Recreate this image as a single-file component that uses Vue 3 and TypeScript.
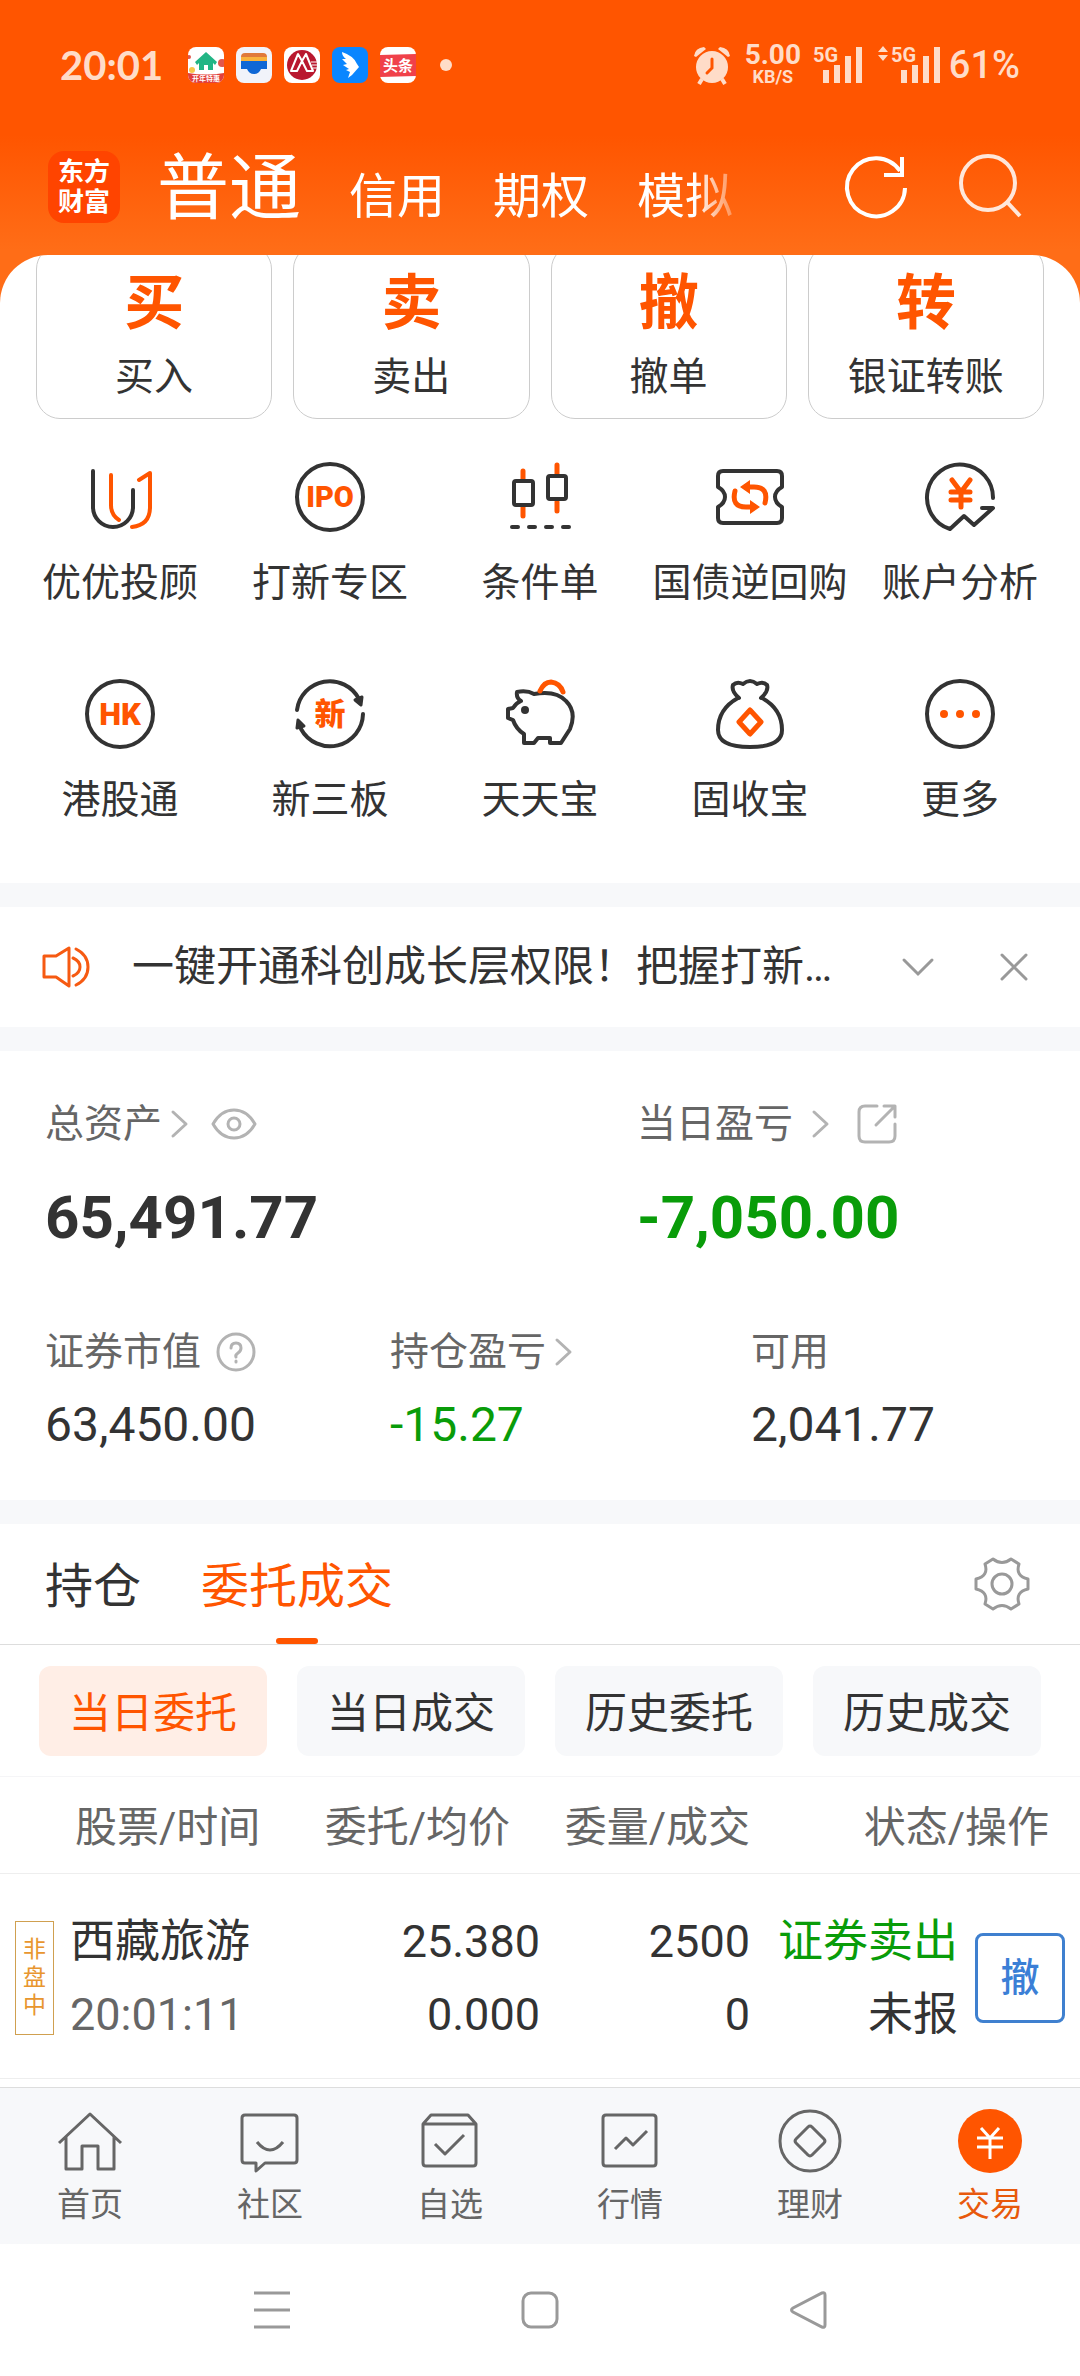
<script setup lang="ts">
import { ref } from 'vue'

interface Order {
  tag: string
  name: string
  time: string
  price: string
  average: string
  amount: string
  filled: string
  side: string
  state: string
}

const accountTabs: string[] = ['普通', '信用', '期权', '模拟']
const activeAccount = ref('普通')

const quickActions = [
  { glyph: '买', label: '买入' },
  { glyph: '卖', label: '卖出' },
  { glyph: '撤', label: '撤单' },
  { glyph: '转', label: '银证转账' },
]

const services = [
  { icon: 'advisor', label: '优优投顾' },
  { icon: 'ipo', label: '打新专区' },
  { icon: 'candles', label: '条件单' },
  { icon: 'repo', label: '国债逆回购' },
  { icon: 'analysis', label: '账户分析' },
  { icon: 'hk', label: '港股通' },
  { icon: 'neeq', label: '新三板' },
  { icon: 'piggy', label: '天天宝' },
  { icon: 'bag', label: '固收宝' },
  { icon: 'more', label: '更多' },
]

const noticeOpen = ref(true)

const bookTabs: string[] = ['持仓', '委托成交']
const activeBook = ref('委托成交')

const filters: string[] = ['当日委托', '当日成交', '历史委托', '历史成交']
const activeFilter = ref('当日委托')

const orders: Order[] = [
  {
    tag: '非盘中',
    name: '西藏旅游',
    time: '20:01:11',
    price: '25.380',
    average: '0.000',
    amount: '2500',
    filled: '0',
    side: '证券卖出',
    state: '未报',
  },
]

const navItems = [
  { icon: 'home', label: '首页' },
  { icon: 'community', label: '社区' },
  { icon: 'watchlist', label: '自选' },
  { icon: 'market', label: '行情' },
  { icon: 'wealth', label: '理财' },
  { icon: 'trade', label: '交易' },
]
const activeNav = ref('trade')
</script>

<template>
  <div class="page">
    <header class="top">
      <div class="status">
        <span class="clock">20:01</span>
        <div class="apps">
          <svg class="app" viewBox="0 0 36 36">
            <clipPath id="app-clip"><rect width="36" height="36" rx="8" /></clipPath>
            <g clip-path="url(#app-clip)">
              <rect width="36" height="36" fill="#fff" />
              <circle cx="34" cy="16" r="4" fill="#e2574c" />
              <circle cx="1" cy="10" r="2" fill="#e2574c" />
              <circle cx="4" cy="23" r="3" fill="#f7c64a" />
              <path d="M0 26Q18 29 36 26V36H0Z" fill="#e2403c" />
              <path d="M18 5L7 15l2 3 2-2v7h5v-5h4v5h5v-7l2 2 2-3Z" fill="#22b585" />
              <text x="18" y="34" text-anchor="middle" font-size="7" font-weight="700" fill="#fff">开年特惠</text>
            </g>
          </svg>
          <svg class="app" viewBox="0 0 36 36">
            <rect width="36" height="36" rx="8" fill="#f1f3fa" />
            <path d="M5 10q0-4 4-4h18q4 0 4 4Z" fill="#e0793a" />
            <path d="M5 10h26v4H5Z" fill="#f9b23c" />
            <path d="M5 14h26v8h-6q-2 5-7 5t-7-5H5Z" fill="#0f67d6" />
          </svg>
          <svg class="app" viewBox="0 0 36 36">
            <rect width="36" height="36" rx="8" fill="#fff" />
            <circle cx="18" cy="18" r="15" fill="#b9182f" />
            <path d="M14 7L7 24H13L18 14 23 24H29L22 7 18 14Z" fill="none" stroke="#fff" stroke-width="2" stroke-linejoin="round" />
            <path d="M27 15h7M28 18h6M29 21h4" stroke="#fff" stroke-width="1" />
          </svg>
          <svg class="app" viewBox="0 0 36 36">
            <rect width="36" height="36" rx="8" fill="#0a86ff" />
            <path d="M10 5Q22 9 25 17L27 20 20 28 16 31 18 25 14 23 17 22 11 18 15 17 10 12 14 12Q10 9 10 5Z" fill="#fff" />
          </svg>
          <svg class="app" viewBox="0 0 36 36">
            <rect width="36" height="36" rx="8" fill="#fff" />
            <path d="M0 8l36-1v22l-36 1Z" fill="#f0414a" />
            <text x="18" y="24" text-anchor="middle" font-size="15" font-weight="700" fill="#fff">头条</text>
          </svg>
        </div>
        <i class="dot"></i>
        <div class="signals">
          <svg class="alarm" viewBox="0 0 38 38" fill="currentColor">
            <path d="M1 10Q2 2 11 1L13 3 3 11ZM37 10Q36 2 27 1L25 3 35 11Z" />
            <path d="M19 5a16 16 0 1 1 0 32a16 16 0 1 1 0-32Z" />
            <path d="M9 33l-3 5M29 33l3 5" stroke="currentColor" stroke-width="4" />
            <path d="M19 13v9l-5 5" fill="none" stroke="#ff5500" stroke-width="3" stroke-linecap="round" />
          </svg>
          <span class="speed"><b>5.00</b><small>KB/S</small></span>
          <svg class="bars" viewBox="0 0 50 38" fill="currentColor">
            <text x="0" y="16" font-size="20" font-weight="700">5G</text>
            <path d="M10 24h6v13h-6ZM21 19h6v18h-6ZM32 10h6v27h-6ZM43 1h6v36h-6Z" />
          </svg>
          <svg class="bars wide" viewBox="0 0 64 38" fill="currentColor">
            <path d="M6 0l5 6H1ZM6 15l5-6H1Z" />
            <text x="14" y="16" font-size="20" font-weight="700">5G</text>
            <path d="M24 24h6v13h-6ZM35 19h6v18h-6ZM46 10h6v27h-6ZM57 1h6v36h-6Z" />
          </svg>
          <span class="battery">61%</span>
        </div>
      </div>

      <div class="titlebar">
        <div class="logo">东方<br />财富</div>
        <nav class="accounts">
          <button
            v-for="tab in accountTabs"
            :key="tab"
            type="button"
            :class="{ active: tab === activeAccount }"
            @click="activeAccount = tab"
          >{{ tab }}</button>
        </nav>
        <button class="tool refresh" type="button" aria-label="刷新">
          <svg viewBox="0 0 66 66" fill="none" stroke="currentColor" stroke-width="4">
            <path d="M62 34A29 29 0 1 1 57 17" />
            <path d="M59 3V21H41" />
          </svg>
        </button>
        <button class="tool" type="button" aria-label="搜索">
          <svg viewBox="0 0 66 66" fill="none" stroke="currentColor" stroke-width="4" opacity="0.850">
            <circle cx="31" cy="29" r="27" />
            <path d="M50 48L63 62" />
          </svg>
        </button>
      </div>
    </header>

    <section class="panel">
      <div class="cards">
        <button v-for="item in quickActions" :key="item.label" class="card" type="button">
          <span class="glyph">{{ item.glyph }}</span>
          <span class="caption">{{ item.label }}</span>
        </button>
      </div>
      <div class="services">
        <a v-for="item in services" :key="item.icon" class="service" href="#">
          <svg viewBox="0 0 72 72" fill="none" stroke="#333" stroke-width="4" stroke-linecap="round" stroke-linejoin="round">
            <template v-if="item.icon === 'advisor'">
              <path d="M9 10V46a20 20 0 0 0 40 0V29" />
              <path class="hot" d="M27 14V44q0 10 8 15M48 66Q66 64 66 46V12L55 19" />
            </template>
            <template v-else-if="item.icon === 'ipo'">
              <circle cx="36" cy="36" r="33" />
              <text class="mark" x="36" y="46" font-size="29">IPO</text>
            </template>
            <template v-else-if="item.icon === 'candles'">
              <path class="hot" d="M19 10V19M19 46V55M53 4V13M53 41V50" stroke-width="5" />
              <rect x="10" y="20" width="19" height="24" rx="2" />
              <rect x="44" y="15" width="18" height="23" rx="2" />
              <path d="M8 66h6M25 66h6M42 66h6M59 66h6" />
            </template>
            <template v-else-if="item.icon === 'repo'">
              <path d="M4 15Q4 10 9 10H63Q68 10 68 15V26q-7 4-7 10t7 10V57q0 5-5 5H9q-5 0-5-5V46q7-4 7-10t-7-10Z" />
              <path class="hot" d="M21 30Q17 46 32 46H38M51 42Q55 26 40 26H34" stroke-width="5" />
              <path d="M36 39L46 46 36 53ZM36 19L26 26 36 33Z" fill="#ff5500" stroke="none" />
            </template>
            <template v-else-if="item.icon === 'analysis'">
              <path d="M69 37A33 33 0 1 0 26 68L40 55 50 64 69 47H58" />
              <path class="hot" d="M28 19L37 31 46 19M37 31V46M27 31H46M27 39H46" stroke-width="5" />
            </template>
            <template v-else-if="item.icon === 'hk'">
              <circle cx="36" cy="36" r="33" />
              <text class="mark" x="36" y="47" font-size="31">HK</text>
            </template>
            <template v-else-if="item.icon === 'neeq'">
              <path d="M3 32A33 33 0 0 1 65 21M69 36A33 33 0 0 1 7 51" />
              <path d="M61 22L68 19 67 27ZM4 42L10 48 3 50Z" fill="#333" stroke-width="3" />
              <text class="mark" x="36" y="47" font-size="31">新</text>
            </template>
            <template v-else-if="item.icon === 'piggy'">
              <path d="M13 14q10-2 17 2Q52 12 62 23 73 34 66 51L57 65H46V60H34L30 65H20V56Q12 51 9 42L4 40V31L9 30Q12 25 17 23 12 20 13 14Z" />
              <circle cx="21" cy="32" r="4" fill="#333" stroke="none" />
              <path class="hot" d="M36 13Q40 4 47 4 56 5 59 14" stroke-width="5" />
            </template>
            <template v-else-if="item.icon === 'bag'">
              <path d="M24 20Q4 31 4 52 4 69 36 69 68 69 68 52 68 31 48 20M25 20Q17 13 19 7 23 3 29 6 36 0 43 6 49 3 53 7 55 13 47 20" />
              <path class="hot" d="M36 32L47 44 36 56 25 44Z" stroke-width="5" />
            </template>
            <template v-else>
              <circle cx="36" cy="36" r="33" />
              <path class="hot" d="M20 36h0M36 36h0M52 36h0" stroke-width="8" />
            </template>
          </svg>
          <span class="caption">{{ item.label }}</span>
        </a>
      </div>
    </section>

    <section v-if="noticeOpen" class="notice">
      <svg class="horn" viewBox="0 0 48 42" fill="none" stroke="#f65a12" stroke-width="3" stroke-linecap="round" stroke-linejoin="round">
        <path d="M2 10H14L27 2V40L14 31H2ZM31 12q7 3 7 9t-7 9M34 3Q46 9 46 21T34 39" />
      </svg>
      <p>一键开通科创成长层权限！把握打新…</p>
      <button type="button" aria-label="展开">
        <svg viewBox="0 0 32 32"><path d="M2 9L16 23 30 9" /></svg>
      </button>
      <button type="button" aria-label="关闭" @click="noticeOpen = false">
        <svg viewBox="0 0 32 32"><path d="M4 4L28 28M28 4L4 28" /></svg>
      </button>
    </section>

    <section class="assets">
      <div class="totals">
        <div>
          <div class="label">
            总资产
            <svg class="chev" viewBox="0 0 16 26"><path d="M1 1L14 13 1 25" /></svg>
            <svg class="eye" viewBox="0 0 46 32">
              <path d="M2 16Q10 2 23 2T44 16Q36 30 23 30T2 16Z" />
              <circle cx="23" cy="16" r="6" />
            </svg>
          </div>
          <div class="big">65,491.77</div>
        </div>
        <div>
          <div class="label today">
            当日盈亏
            <svg class="chev" viewBox="0 0 16 26"><path d="M1 1L14 13 1 25" /></svg>
            <svg class="share" viewBox="0 0 40 40">
              <path d="M20 2H8Q2 2 2 8V32Q2 38 8 38H32Q38 38 38 32V20M27 2H38V13M37 3L19 21" />
            </svg>
          </div>
          <div class="big fall">-7,050.00</div>
        </div>
      </div>
      <div class="details">
        <div>
          <div class="label">
            证券市值
            <svg class="help" viewBox="0 0 40 40">
              <circle cx="20" cy="20" r="18" />
              <path d="M15 16q0-5 5-5t5 5q0 3-3 5t-2 4M20 29v1" />
            </svg>
          </div>
          <div class="value">63,450.00</div>
        </div>
        <div>
          <div class="label">
            持仓盈亏
            <svg class="chev" viewBox="0 0 16 26"><path d="M1 1L14 13 1 25" /></svg>
          </div>
          <div class="value fall">-15.27</div>
        </div>
        <div>
          <div class="label">可用</div>
          <div class="value">2,041.77</div>
        </div>
      </div>
    </section>

    <section class="book">
      <div class="tabs">
        <button
          v-for="tab in bookTabs"
          :key="tab"
          type="button"
          class="tab"
          :class="{ active: tab === activeBook }"
          @click="activeBook = tab"
        >{{ tab }}</button>
        <button class="gear" type="button" aria-label="设置">
          <svg viewBox="0 0 56 56" fill="none" stroke="#999" stroke-width="3" stroke-linejoin="round">
            <path d="M2 23V33Q15 36 11 48L19 53Q28 46 37 53L45 48Q41 36 54 33V23Q41 20 45 8L37 3Q28 10 19 3L11 8Q15 20 2 23Z" />
            <circle cx="28" cy="28" r="10" />
          </svg>
        </button>
      </div>
      <div class="chips">
        <button
          v-for="item in filters"
          :key="item"
          type="button"
          :class="{ active: item === activeFilter }"
          @click="activeFilter = item"
        >{{ item }}</button>
      </div>
      <table>
        <thead>
          <tr>
            <th class="c1">股票/时间</th>
            <th class="c2">委托/均价</th>
            <th class="c3">委量/成交</th>
            <th class="c4">状态/操作</th>
          </tr>
        </thead>
        <tbody>
          <tr v-for="order in orders" :key="order.time">
            <td>
              <div class="stock">
                <span class="tag">{{ order.tag }}</span>
                <div>{{ order.name }}<br /><span class="muted">{{ order.time }}</span></div>
              </div>
            </td>
            <td>{{ order.price }}<br />{{ order.average }}</td>
            <td>{{ order.amount }}<br />{{ order.filled }}</td>
            <td>
              <div class="state">
                <div><span class="fall">{{ order.side }}</span><br />{{ order.state }}</div>
                <button type="button">撤</button>
              </div>
            </td>
          </tr>
        </tbody>
      </table>
    </section>

    <nav class="bottom">
      <a v-for="item in navItems" :key="item.icon" href="#" :class="{ active: item.icon === activeNav }" @click.prevent="activeNav = item.icon">
        <svg viewBox="0 0 64 64" fill="none" stroke="#666" stroke-width="3" stroke-linejoin="round">
          <path v-if="item.icon === 'home'" d="M1 34L32 5 63 34M8 28V60H24V37H40V60H56V28" />
          <path v-else-if="item.icon === 'community'" d="M7 6H56Q59 6 59 9V51Q59 54 56 54H27L18 62V54H7Q4 54 4 51V9Q4 6 7 6ZM19 33Q32 49 45 33" />
          <path v-else-if="item.icon === 'watchlist'" d="M5 15H58V54Q58 57 55 57H8Q5 57 5 54ZM5 15L13 6H50L58 15M17 35L27 45 46 26" />
          <path v-else-if="item.icon === 'market'" d="M8 6H55Q58 6 58 9V54Q58 57 55 57H8Q5 57 5 54V9Q5 6 8 6ZM17 40L28 29 35 36 49 22" />
          <template v-else-if="item.icon === 'wealth'">
            <circle cx="32" cy="32" r="30" />
            <path d="M30 18Q32 16 34 18L46 30Q48 32 46 34L34 46Q32 48 30 46L18 34Q16 32 18 30Z" />
          </template>
          <template v-else>
            <circle cx="32" cy="32" r="32" fill="#ff5500" stroke="none" />
            <path d="M23 19L32 29 41 19M32 29V50M19 29H45M19 38H45" stroke="#fff" />
          </template>
        </svg>
        <span>{{ item.label }}</span>
      </a>
    </nav>

    <div class="system">
      <button type="button" aria-label="最近任务">
        <svg viewBox="0 0 40 40"><path d="M2 3H38M2 20H38M2 37H38" /></svg>
      </button>
      <button type="button" aria-label="主屏幕">
        <svg viewBox="0 0 40 40"><rect x="3" y="3" width="34" height="34" rx="8" /></svg>
      </button>
      <button type="button" aria-label="返回">
        <svg viewBox="0 0 40 40"><path d="M34 3Q37 2 37 5V35Q37 38 34 37L5 22Q2 20 5 18Z" /></svg>
      </button>
    </div>
  </div>
</template>

<style>
body {
  margin: 0;
  background: #fff;
}
</style>

<style scoped>
.page {
  font-family: Roboto, "Noto Sans CJK SC", sans-serif;
  color: #333;
  background: #f7f8fa;
}

button {
  margin: 0;
  padding: 0;
  border: 0;
  background: none;
  font: inherit;
  color: inherit;
}

a {
  color: inherit;
  text-decoration: none;
}

svg {
  display: block;
  flex: none;
  overflow: visible;
}

.top {
  height: 303px;
  margin-bottom: -48px;
  color: #fff;
  background: linear-gradient(#ff5500 135px, #ff6d17 250px);
}

.status {
  display: flex;
  align-items: center;
  height: 130px;
  padding: 0 60px;
  color: #ffdcc8;
}

.clock {
  width: 102px;
  font: 700 40px/48px Lato, sans-serif;
}

.apps {
  display: flex;
  gap: 12px;
  margin-left: 26px;
}

.app {
  width: 36px;
  height: 36px;
}

.dot {
  width: 12px;
  height: 12px;
  margin-left: 24px;
  border-radius: 50%;
  background: currentColor;
}

.signals {
  display: flex;
  align-items: center;
  margin-left: auto;
}

.alarm {
  width: 38px;
  height: 38px;
}

.speed {
  display: flex;
  flex-direction: column;
  align-items: center;
  width: 60px;
  margin: 0 10px 0 12px;
}

.speed b {
  font-size: 28px;
  line-height: 24px;
  font-weight: 700;
}

.speed small {
  font-size: 18px;
  line-height: 20px;
  font-weight: 700;
}

.bars {
  width: 50px;
  height: 38px;
}

.bars.wide {
  width: 64px;
  margin-left: 14px;
}

.battery {
  margin-left: 8px;
  font-size: 38px;
  font-weight: 500;
}

.titlebar {
  display: flex;
  align-items: center;
  height: 72px;
  padding: 21px 57px 0 48px;
}

.logo {
  width: 72px;
  height: 60px;
  padding: 6px 0;
  border-radius: 16px;
  background: #ff4400;
  text-align: center;
  font-size: 26px;
  line-height: 30px;
  font-weight: 700;
}

.accounts {
  display: flex;
  align-items: baseline;
  gap: 48px;
  flex: 1;
  margin-left: 37px;
  margin-right: 93px;
  padding-top: 12px;
  overflow: hidden;
  white-space: nowrap;
  -webkit-mask-image: linear-gradient(to left, transparent, #000 56px);
  mask-image: linear-gradient(to left, transparent, #000 56px);
}

.accounts button {
  font-size: 48px;
  line-height: 88px;
}

.accounts button.active {
  font-size: 72px;
}

.tool svg {
  width: 66px;
  height: 66px;
}

.refresh {
  margin-right: 48px;
}

.panel {
  padding: 0 0 58px;
  border-radius: 48px 48px 0 0;
  overflow: hidden;
  background: #fff;
}

.cards {
  display: grid;
  grid-template-columns: repeat(4, 1fr);
  gap: 21px;
  margin-top: -10px;
  padding: 0 36px;
}

.card {
  display: flex;
  flex-direction: column;
  align-items: center;
  gap: 18px;
  padding: 28px 0 16px;
  border: 1px solid #ccc;
  border-radius: 24px;
}

.glyph {
  font-size: 60px;
  line-height: 60px;
  font-weight: 700;
  color: #ff5500;
}

.caption {
  font-size: 39px;
  line-height: 50px;
  white-space: nowrap;
}

.services {
  display: grid;
  grid-template-columns: repeat(5, 1fr);
  row-gap: 70px;
  margin-top: 42px;
  padding: 0 15px;
}

.service {
  display: flex;
  flex-direction: column;
  align-items: center;
  gap: 25px;
}

.service svg {
  width: 72px;
  height: 72px;
}

.hot {
  stroke: #ff5500;
}

.mark {
  fill: #ff5500;
  stroke: none;
  text-anchor: middle;
  font-weight: 900;
}

.notice {
  display: flex;
  align-items: center;
  height: 120px;
  margin-top: 24px;
  padding: 0 50px 0 42px;
  background: #fff;
}

.horn {
  width: 48px;
  height: 42px;
}

.notice p {
  flex: 1;
  margin: 0 0 0 42px;
  overflow: hidden;
  white-space: nowrap;
  font-size: 42px;
  line-height: 60px;
}

.notice button {
  margin-left: 64px;
}

.notice button svg {
  width: 32px;
  height: 32px;
  fill: none;
  stroke: #999;
  stroke-width: 3;
  stroke-linecap: round;
}

.assets {
  margin-top: 24px;
  padding: 49px 0 47px 45px;
  background: #fff;
}

.totals {
  display: grid;
  grid-template-columns: 592fr 443fr;
}

.details {
  display: grid;
  grid-template-columns: 345fr 361fr 329fr;
  margin-top: 80px;
}

.label {
  display: flex;
  align-items: center;
  font-size: 39px;
  line-height: 48px;
  color: #666;
}

.label svg {
  fill: none;
  stroke: #b3b3b3;
  stroke-width: 3;
  stroke-linecap: round;
  stroke-linejoin: round;
}

.chev {
  width: 16px;
  height: 26px;
  margin-left: 10px;
}

.eye {
  width: 46px;
  height: 32px;
  margin-left: 23px;
}

.today .chev {
  margin-left: 20px;
}

.share {
  width: 40px;
  height: 40px;
  margin-left: 28px;
}

.help {
  width: 40px;
  height: 40px;
  margin-left: 15px;
}

.big {
  margin-top: 40px;
  font-size: 60px;
  line-height: 60px;
  font-weight: 700;
}

.value {
  margin-top: 21px;
  font-size: 48px;
  line-height: 56px;
}

.fall {
  color: #099c09;
}

.book {
  margin-top: 24px;
  padding-bottom: 8px;
  background: #fff;
}

.tabs {
  display: flex;
  gap: 60px;
  height: 120px;
  padding: 0 50px 0 45px;
  border-bottom: 1px solid #ddd;
  font-size: 48px;
}

.tab {
  padding-bottom: 4px;
}

.tabs .active {
  position: relative;
  color: #ff5500;
}

.tabs .active::after {
  content: "";
  position: absolute;
  left: 50%;
  bottom: 0;
  width: 42px;
  height: 6px;
  margin-left: -21px;
  border-radius: 3px;
  background: #ff5500;
}

.gear {
  margin-left: auto;
}

.gear svg {
  width: 56px;
  height: 56px;
}

.chips {
  display: grid;
  grid-template-columns: repeat(4, 1fr);
  gap: 30px;
  padding: 21px 39px 20px;
  border-bottom: 1px solid #f5f5f7;
}

.chips button {
  height: 90px;
  padding-bottom: 4px;
  border-radius: 12px;
  background: #f7f8fa;
  font-size: 42px;
}

.chips .active {
  color: #ff5500;
  background: #ffeee6;
}

table {
  width: 100%;
  border-collapse: separate;
  border-spacing: 0;
  table-layout: fixed;
}

th {
  box-sizing: border-box;
  height: 97px;
  padding: 0 0 4px;
  border-bottom: 1px solid #eee;
  font-size: 42px;
  font-weight: 400;
  color: #666;
  text-align: right;
  white-space: nowrap;
}

.c1 {
  width: 28%;
  padding-left: 75px;
  text-align: left;
}

.c2 {
  width: 22%;
  padding-right: 30px;
}

.c3 {
  width: 20%;
}

.c4 {
  padding-right: 31px;
}

td {
  box-sizing: border-box;
  height: 205px;
  padding: 4px 0 0;
  border-bottom: 1px solid #eee;
  font-size: 45px;
  line-height: 73px;
  text-align: right;
  white-space: nowrap;
}

th:nth-child(3),
td:nth-child(3) {
  padding-right: 6px;
}

.stock {
  display: flex;
  align-items: center;
  gap: 16px;
  padding-left: 15px;
  text-align: left;
}

.tag {
  box-sizing: border-box;
  width: 39px;
  padding: 14px 7px;
  border: 1px solid #d0a050;
  font-size: 23px;
  line-height: 28px;
  color: #e8962f;
  white-space: normal;
  word-break: break-all;
}

.muted {
  color: #666;
}

.state {
  display: flex;
  align-items: center;
  justify-content: flex-end;
  gap: 17px;
  padding-right: 15px;
}

.state button {
  width: 90px;
  height: 90px;
  border: 3px solid #3f80cf;
  border-radius: 8px;
  font-size: 39px;
  font-weight: 500;
  line-height: 84px;
  color: #3b7fd6;
}

.bottom {
  display: grid;
  grid-template-columns: repeat(6, 1fr);
  padding: 21px 0 19px;
  border-top: 1px solid #ddd;
}

.bottom a {
  display: flex;
  flex-direction: column;
  align-items: center;
  gap: 12px;
  font-size: 33px;
  line-height: 40px;
  color: #666;
}

.bottom svg {
  width: 64px;
  height: 64px;
}

.bottom .active {
  color: #e8590c;
}

.system {
  display: flex;
  align-items: center;
  justify-content: space-between;
  height: 132px;
  padding: 0 252px;
  background: #fff;
}

.system svg {
  width: 40px;
  height: 40px;
  fill: none;
  stroke: #999;
  stroke-width: 3;
}
</style>
